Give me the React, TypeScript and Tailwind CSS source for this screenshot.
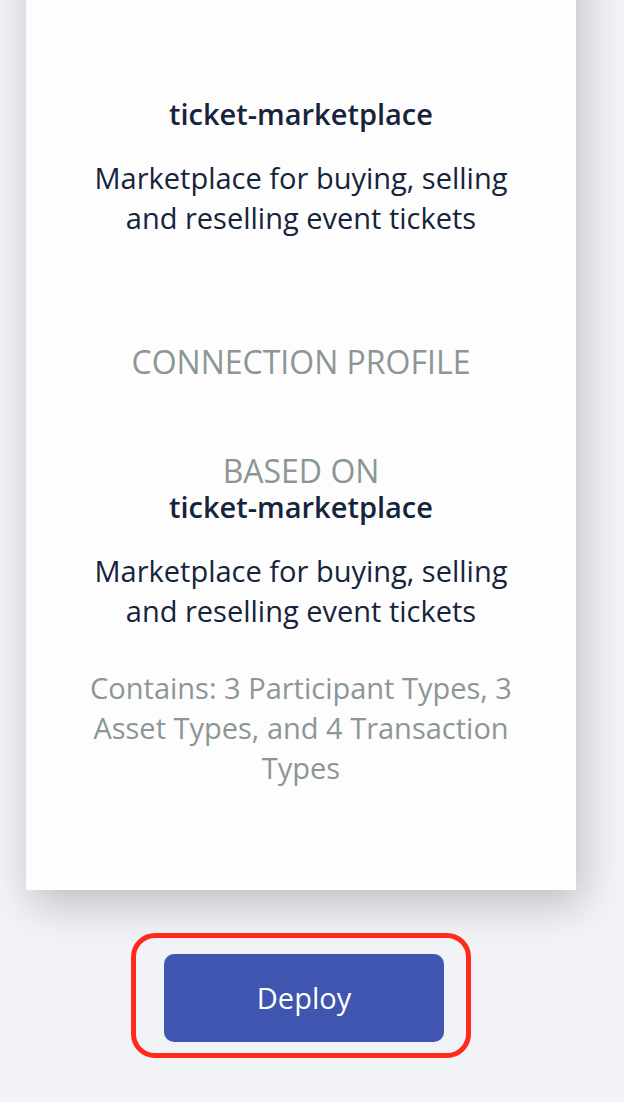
export default function App() {
  return (
    <main className="flex min-h-screen flex-col items-center overflow-hidden bg-[#f1f3f7] pr-12 pl-[26px] font-['Open_Sans',sans-serif] text-[#15243b]">
      <section className="-mt-16 w-full bg-[#fdfdfd] px-16 pt-40 pb-[102px] text-center text-[29px] leading-10 shadow-[6px_14px_40px_rgba(0,0,0,0.22)]">
        <h1 className="leading-9 font-semibold">ticket-marketplace</h1>
        <p className="mt-[26px]">Marketplace for buying, selling and reselling event tickets</p>
        <h2 className="mt-[106px] text-[32px] leading-9 text-[#8c9696]">CONNECTION PROFILE</h2>
        <h2 className="mt-[73px] text-[32px] leading-9 text-[#8c9696]">BASED ON</h2>
        <h3 className="leading-9 font-semibold">ticket-marketplace</h3>
        <p className="mt-[26px]">Marketplace for buying, selling and reselling event tickets</p>
        <p className="mt-[37px] text-[#8c9696]">Contains: 3 Participant Types, 3 Asset Types, and 4 Transaction Types</p>
      </section>
      <div className="mt-[43px] flex h-[125px] w-[340px] justify-center rounded-[24px] border-[5px] border-[#ff2a1c] pt-4 pl-[6px]">
        <button type="button" className="h-[88px] w-[280px] rounded-[10px] bg-[#4055af] text-[29px] font-medium text-white">Deploy</button>
      </div>
    </main>
  );
}
